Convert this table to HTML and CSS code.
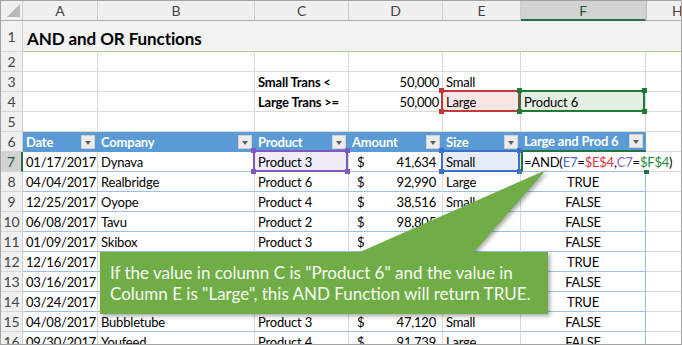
FILE: index.html
```html
<!DOCTYPE html>
<html lang="en">
<head>
    <meta charset="UTF-8">
    <title>AND and OR Functions</title>
    <link rel="stylesheet" href="styles.css">
</head>
<body>
    <div class="sheet">
        <!-- column letters -->
        <div class="row colhead">
            <div class="corner"><span class="tri"></span></div>
            <div>A</div><div>B</div><div>C</div><div>D</div><div>E</div>
            <div class="active-col">F</div>
            <div class="hidden-left">H</div>
        </div>

        <!-- title -->
        <div class="row title-row">
            <div class="rh">1</div>
            <div class="title">AND and OR Functions</div>
        </div>

        <div class="row">
            <div class="rh">2</div>
            <div></div><div></div><div></div><div></div><div></div><div></div><div></div>
        </div>
        <div class="row">
            <div class="rh">3</div>
            <div></div><div></div>
            <div class="b">Small Trans &lt;</div>
            <div class="num">50,000</div>
            <div>Small</div>
            <div></div><div></div>
        </div>
        <div class="row">
            <div class="rh">4</div>
            <div></div><div></div>
            <div class="b">Large Trans &gt;=</div>
            <div class="num">50,000</div>
            <div class="hl hl-red">Large</div>
            <div class="hl hl-green">Product 6</div>
            <div></div>
        </div>
        <div class="row">
            <div class="rh">5</div>
            <div></div><div></div><div></div><div></div><div></div><div></div><div></div>
        </div>

        <!-- table header -->
        <div class="row thead">
            <div class="rh">6</div>
            <div>Date<span class="filter"></span></div>
            <div>Company<span class="filter"></span></div>
            <div>Product<span class="filter"></span></div>
            <div>Amount<span class="filter"></span></div>
            <div>Size<span class="filter"></span></div>
            <div class="edit-top">Large and Prod 6<span class="filter"></span></div>
            <div></div>
        </div>

        <div class="row trow">
            <div class="rh active-row">7</div>
            <div>01/17/2017</div>
            <div>Dynava</div>
            <div class="hl hl-purple">Product 3</div>
            <div class="money"><span>$</span><span>41,634</span></div>
            <div class="hl hl-blue">Small</div>
            <div class="formula">=AND(<span class="r-blue">E7</span>=<span class="r-red">$E$4</span>,<span class="r-purple">C7</span>=<span class="r-green">$F$4</span>)</div>
            <div class="under"></div>
        </div>
        <div class="row trow">
            <div class="rh">8</div>
            <div>04/04/2017</div><div>Realbridge</div><div>Product 6</div>
            <div class="money"><span>$</span><span>92,990</span></div>
            <div>Large</div><div class="c">TRUE</div><div></div>
        </div>
        <div class="row trow">
            <div class="rh">9</div>
            <div>12/25/2017</div><div>Oyope</div><div>Product 4</div>
            <div class="money"><span>$</span><span>38,516</span></div>
            <div>Small</div><div class="c">FALSE</div><div></div>
        </div>
        <div class="row trow">
            <div class="rh">10</div>
            <div>06/08/2017</div><div>Tavu</div><div>Product 2</div>
            <div class="money"><span>$</span><span>98,805</span></div>
            <div>Large</div><div class="c">FALSE</div><div></div>
        </div>
        <div class="row trow">
            <div class="rh">11</div>
            <div>01/09/2017</div><div>Skibox</div><div>Product 3</div>
            <div class="money"><span>$</span><span>27,409</span></div>
            <div>Small</div><div class="c">FALSE</div><div></div>
        </div>
        <!-- rows 12-14 sit under the callout -->
        <div class="row trow">
            <div class="rh">12</div>
            <div>12/16/2017</div><div></div><div></div><div></div><div></div>
            <div class="c">TRUE</div><div></div>
        </div>
        <div class="row trow">
            <div class="rh">13</div>
            <div>03/16/2017</div><div></div><div></div><div></div><div></div>
            <div class="c">FALSE</div><div></div>
        </div>
        <div class="row trow">
            <div class="rh">14</div>
            <div>03/24/2017</div><div></div><div></div><div></div><div></div>
            <div class="c">TRUE</div><div></div>
        </div>
        <div class="row trow">
            <div class="rh">15</div>
            <div>04/08/2017</div><div>Bubbletube</div><div>Product 3</div>
            <div class="money"><span>$</span><span>47,120</span></div>
            <div>Small</div><div class="c">FALSE</div><div></div>
        </div>
        <div class="row trow">
            <div class="rh">16</div>
            <div>09/30/2017</div><div>Youfeed</div><div>Product 4</div>
            <div class="money"><span>$</span><span>91,739</span></div>
            <div>Large</div><div class="c">FALSE</div><div></div>
        </div>

        <!-- callout over the sheet -->
        <svg class="callout-shape" width="682" height="345" viewBox="0 0 682 345">
            <polygon points="100,252 360,252 546,170 474,252 548,252 548,314 100,314" fill="#70ad47"/>
        </svg>
        <div class="callout-text">If the value in column C is "Product 6" and the value in<br>Column E is "Large", this AND Function will return TRUE.</div>
    </div>
</body>
</html>
```

FILE: styles.css
```css
body {
    margin: 0;
    font-family: Lato, "Noto Sans", sans-serif;
}
.sheet {
    width: 682px;
    height: 345px;
    box-sizing: border-box;
    border: 1px solid #a3a3a3;
    position: relative;
    overflow: hidden;
    background: white;
    font-size: 13px;
    letter-spacing: -0.2px;
    color: #000;
}
.row {
    display: grid;
    grid-template-columns: 22px 75px 157px 94px 94px 78px 125px 80px;
    height: 20px;
}
.row > div {
    box-sizing: border-box;
    border-right: 1px solid #dadada;
    border-bottom: 1px solid #dadada;
    padding: 0 3px;
    white-space: nowrap;
    display: flex;
    align-items: center;
    min-width: 0;
}

/* headers */
.colhead { height: 20px; }
.colhead > div {
    background: #f0f0f0;
    border-right-color: #cdcdcd;
    border-bottom-color: #ababab;
    justify-content: center;
    color: #444;
    font-size: 14px;
}
.colhead .corner {
    position: relative;
}
.tri {
    position: absolute;
    right: 2px;
    bottom: 3px;
    width: 13px;
    height: 13px;
    background: #b8b8b8;
    clip-path: polygon(100% 0, 100% 100%, 0 100%);
}
.colhead .active-col {
    background: #d2d2d2;
    border-bottom: 2px solid #217346;
    color: #1f5c3a;
}
.colhead .hidden-left {
    border-left: 1px solid #bdbdbd;
    justify-content: flex-start;
    padding-left: 25px;
}
.rh {
    background: #f0f0f0;
    justify-content: center;
    color: #444;
    font-size: 14px;
    padding: 0 !important;
    border-right-color: #cdcdcd !important;
    border-bottom-color: #d4d4d4 !important;
}
.rh.active-row {
    background: #d2d2d2;
    color: #1f5c3a;
    border-right: 2px solid #217346 !important;
}

/* title row */
.title-row { height: 31px; }
.title-row > div {
    background: #f2f2f2;
    border-bottom-color: #a9d08e;
}
.title-row .title {
    grid-column: 2 / -1;
    border-right: none;
    font-weight: bold;
    font-size: 17px;
    letter-spacing: -0.1px;
    padding-left: 4px;
    padding-top: 4px;
}

.b { font-weight: bold; }
.num { justify-content: flex-end; }
.c { justify-content: center; }

/* table */
.thead > div:not(.rh) {
    background: #5b9bd5;
    color: white;
    font-weight: bold;
    border-right-color: #5b9bd5;
    border-bottom-color: #5b9bd5;
    justify-content: space-between;
    padding-right: 2px;
}
.thead > div:last-child {
    background: white;
    border-right-color: #dadada;
    border-bottom-color: #dadada;
}
.thead .edit-top {
    border-bottom: 2px solid #217346 !important;
}
.filter {
    width: 14px;
    height: 14px;
    box-sizing: border-box;
    background: #ececec;
    border: 1px solid #d0d0d0;
    position: relative;
}
.filter::after {
    content: "";
    position: absolute;
    left: 3px;
    top: 5px;
    border-left: 3.5px solid transparent;
    border-right: 3.5px solid transparent;
    border-top: 4px solid #5f5f5f;
}
.trow > div:not(.rh):not(:last-child) {
    border-bottom-color: #9bc2e6;
}
.trow > div:nth-child(7) {
    border-right-color: #9bc2e6;
}
.money {
    justify-content: space-between;
    padding: 0 6px 0 8px !important;
}

/* highlighted references */
.hl {
    position: relative;
    z-index: 2;
}
.hl::before {
    content: "";
    position: absolute;
    left: -2px;
    top: -2px;
    right: 0;
    bottom: -1px;
    border: 2px solid var(--c);
}
.hl::after {
    content: "";
    position: absolute;
    left: -4px;
    top: -4px;
    right: -2px;
    bottom: -3px;
    background:
        linear-gradient(var(--c), var(--c)) left top / 5px 5px no-repeat,
        linear-gradient(var(--c), var(--c)) right top / 5px 5px no-repeat,
        linear-gradient(var(--c), var(--c)) left bottom / 5px 5px no-repeat,
        linear-gradient(var(--c), var(--c)) right bottom / 5px 5px no-repeat;
}
.hl-red { --c: #c0393b; background: #fbe6e6; }
.hl-green { --c: #1e7a35; background: #e4efe3; z-index: 3; }
.hl-purple { --c: #7f58c0; background: #efebf7; }
.hl-blue { --c: #3f6fca; background: #e6edf8; }

.formula {
    position: relative;
    z-index: 2;
    overflow: visible;
    border-right: none !important;
    border-left: 2px solid #217346;
    padding-left: 1px !important;
}
.formula::after {
    content: "";
    position: absolute;
    right: -3px;
    bottom: -3px;
    width: 5px;
    height: 4px;
    background: #217346;
}
.r-blue { color: #3f6fca; }
.r-red { color: #d9363e; }
.r-purple { color: #8a5cc6; }
.r-green { color: #1e8a3c; }

/* callout */
.callout-shape {
    position: absolute;
    left: -1px;
    top: -1px;
    filter: drop-shadow(2px 2px 2px rgba(0, 0, 0, 0.35));
}
.callout-text {
    position: absolute;
    left: 99px;
    top: 251px;
    width: 448px;
    height: 62px;
    box-sizing: border-box;
    padding: 0 10px;
    display: flex;
    align-items: center;
    white-space: nowrap;
    color: #f7fbf4;
    font-size: 17px;
    letter-spacing: 0;
    line-height: 21px;
}
```
